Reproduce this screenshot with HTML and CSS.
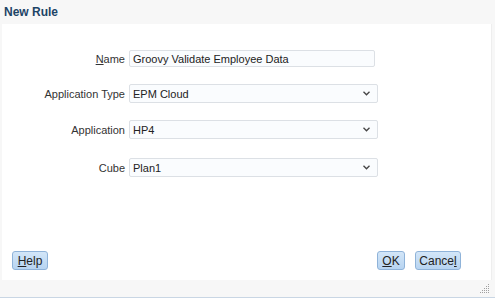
FILE: index.html
```html
<!DOCTYPE html>
<html lang="en">
<head>
    <meta charset="UTF-8">
    <meta name="viewport" content="width=device-width, initial-scale=1.0">
    <title>New Rule</title>
    <link rel="stylesheet" href="styles.css">
</head>
<body>
    <div class="dialog">
        <div class="title">New Rule</div>

        <div class="panel">
            <!-- Rule fields -->
            <div class="form">
                <label class="label" for="ruleName"><u>N</u>ame</label>
                <div class="field text">Groovy Validate Employee Data</div>

                <label class="label">Application Type</label>
                <div class="field select">
                    <span>EPM Cloud</span>
                    <svg class="chevron" viewBox="0 0 7 5"><path d="M0.5 0.8 L3.5 3.8 L6.5 0.8"/></svg>
                </div>

                <label class="label">Application</label>
                <div class="field select">
                    <span>HP4</span>
                    <svg class="chevron" viewBox="0 0 7 5"><path d="M0.5 0.8 L3.5 3.8 L6.5 0.8"/></svg>
                </div>

                <label class="label cube">Cube</label>
                <div class="field select cube">
                    <span>Plan1</span>
                    <svg class="chevron" viewBox="0 0 7 5"><path d="M0.5 0.8 L3.5 3.8 L6.5 0.8"/></svg>
                </div>
            </div>

            <!-- Dialog buttons -->
            <div class="actions">
                <button class="btn help"><u>H</u>elp</button>
                <div class="right">
                    <button class="btn ok"><u>O</u>K</button>
                    <button class="btn cancel">Cance<u>l</u></button>
                </div>
            </div>
        </div>

        <div class="footer">
            <svg class="grip" viewBox="0 0 10 10">
                <rect x="8" y="0" width="1" height="1"/>
                <rect x="6" y="2" width="1" height="1"/><rect x="8" y="2" width="1" height="1"/>
                <rect x="4" y="4" width="1" height="1"/><rect x="6" y="4" width="1" height="1"/><rect x="8" y="4" width="1" height="1"/>
                <rect x="2" y="6" width="1" height="1"/><rect x="4" y="6" width="1" height="1"/><rect x="6" y="6" width="1" height="1"/><rect x="8" y="6" width="1" height="1"/>
                <rect x="0" y="8" width="1" height="1"/><rect x="2" y="8" width="1" height="1"/><rect x="4" y="8" width="1" height="1"/><rect x="6" y="8" width="1" height="1"/><rect x="8" y="8" width="1" height="1"/>
            </svg>
        </div>
    </div>
</body>
</html>
```

FILE: styles.css
```css
/* Oracle-style dialog */
body {
    margin: 0;
    font-family: "Liberation Sans", Arial, sans-serif;
    font-size: 11px;
    background-color: #f7f7f7;
}

.dialog {
    height: 297px;
    display: flex;
    flex-direction: column;
    border-bottom: 1px solid #c9d6e4;
}

.title {
    height: 24px;
    line-height: 25px;
    padding-left: 4px;
    font-weight: bold;
    font-size: 12px;
    color: #1d4466;
}

.panel {
    height: 256px;
    margin: 0 3px 0 2px;
    background-color: #fff;
    border-right: 1px solid #eeeeee;
    display: flex;
    flex-direction: column;
    justify-content: space-between;
    box-sizing: border-box;
    padding: 26px 30px 10px 10px;
}

.form {
    display: grid;
    grid-template-columns: 113px 249px;
    column-gap: 4px;
    row-gap: 17px;
    align-items: center;
}

.label {
    text-align: right;
    color: #333;
}

.cube {
    margin-top: 2px;
}

.field {
    height: 18px;
    box-sizing: border-box;
    border: 1px solid #dce0e5;
    border-radius: 2px;
    background-color: #fafcfe;
    color: #222;
    padding: 0 3px;
    display: flex;
    align-items: center;
    justify-content: space-between;
}

.field.text {
    width: 246px;
    height: 17px;
}

.field.select {
    height: 19px;
}

.chevron {
    width: 7px;
    height: 5px;
    margin-right: 4px;
    fill: none;
    stroke: #444;
    stroke-width: 1.3;
}

.actions {
    display: flex;
    justify-content: space-between;
}

.right {
    display: flex;
    gap: 10px;
}

.btn {
    height: 19px;
    padding: 0;
    font-family: "Liberation Sans", Arial, sans-serif;
    font-size: 12px;
    color: #222;
    border: 1px solid #8fb3d9;
    border-radius: 3px;
    background: linear-gradient(#d3e6f8, #b7d4f1);
}

.help {
    width: 36px;
}

.ok {
    width: 28px;
}

.cancel {
    width: 46px;
}

.footer {
    flex: 1;
    display: flex;
    justify-content: flex-end;
    align-items: flex-end;
    padding: 0 5px 3px 0;
}

.grip {
    width: 10px;
    height: 10px;
    fill: #a0a0a0;
}
```
